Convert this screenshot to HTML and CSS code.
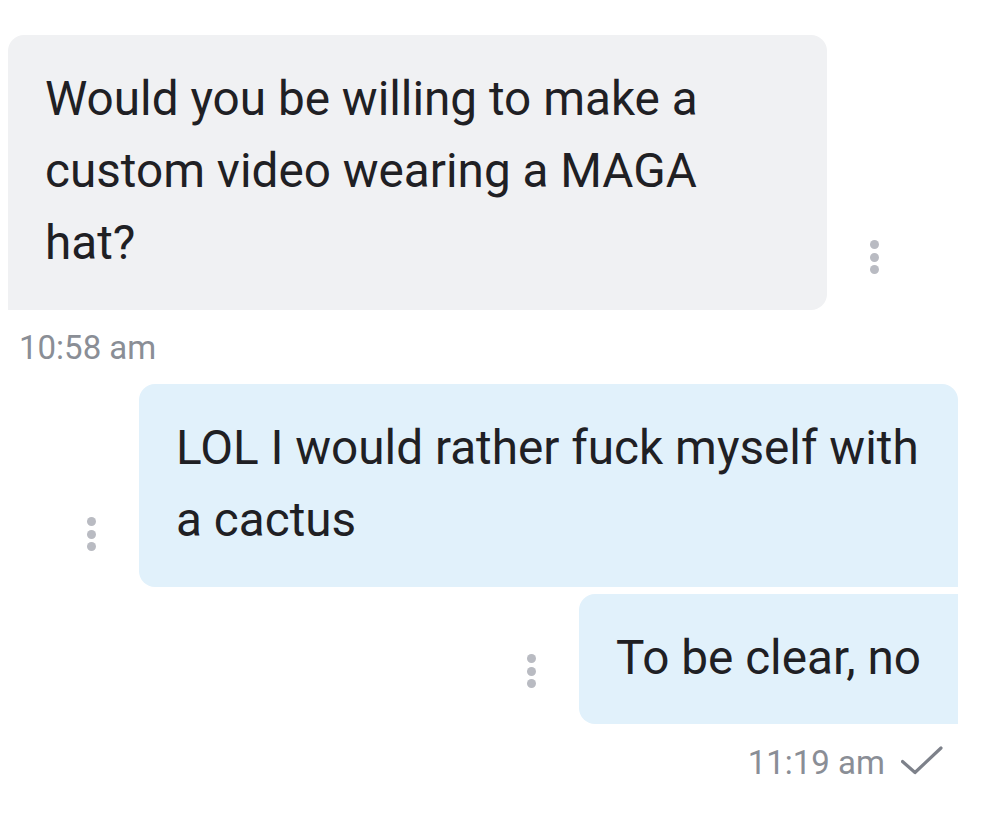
FILE: index.html
```html
<!DOCTYPE html>
<html lang="en">
<head>
<meta charset="utf-8">
<title>Chat</title>
<link rel="stylesheet" href="styles.css">
</head>
<body>
<div class="chat">
  <div class="row row-in">
    <div class="bubble bubble-in">Would you be willing to make a custom video wearing a MAGA hat?</div>
    <div class="dots"><span></span><span></span><span></span></div>
  </div>
  <div class="time time-in">10:58 am</div>

  <div class="row row-out">
    <div class="dots"><span></span><span></span><span></span></div>
    <div class="bubble bubble-out bubble-first">LOL I would rather fuck myself with a cactus</div>
  </div>
  <div class="row row-out row-next">
    <div class="dots"><span></span><span></span><span></span></div>
    <div class="bubble bubble-out bubble-last">To be clear, no</div>
  </div>
  <div class="time time-out">
    <span>11:19 am</span>
    <svg class="check" width="42" height="30" viewBox="0 0 42 30" aria-hidden="true">
      <path d="M1.5 15.5 L14 26.5 L40 2" fill="none" stroke="#7d818a" stroke-width="3.2" stroke-linecap="round" stroke-linejoin="round"/>
    </svg>
  </div>
</div>
</body>
</html>
```

FILE: styles.css
```css
html, body {
  margin: 0;
  padding: 0;
  background: #ffffff;
}

body {
  font-family: Roboto, "Liberation Sans", sans-serif;
  color: #1f2024;
}

.chat {
  width: 1007px;
  padding: 35px 49px 40px 8px;
  box-sizing: border-box;
  display: flex;
  flex-direction: column;
}

.row {
  display: flex;
  align-items: flex-end;
}

.row-out {
  justify-content: flex-end;
}

.row-next {
  margin-top: 7px;
}

.bubble {
  max-width: 819px;
  box-sizing: border-box;
  padding: 28px 37px 31px 37px;
  font-size: 47.7px;
  line-height: 72px;
  letter-spacing: 0;
}

.bubble-in {
  background: #f0f1f3;
  border-radius: 16px 16px 16px 0;
}

.bubble-out {
  background: #e1f1fb;
}

.bubble-first {
  border-radius: 16px 16px 0 16px;
}

.bubble-last {
  border-radius: 16px 0 0 16px;
  padding-bottom: 30px;
}

.dots {
  display: flex;
  flex-direction: column;
  gap: 3.5px;
  margin: 0 43px 36px 43px;
}

.dots span {
  width: 9px;
  height: 9px;
  border-radius: 50%;
  background: #b9bbc2;
}

.time {
  font-size: 33px;
  line-height: 38px;
  color: #8a8e96;
}

.time-in {
  margin: 19px 0 17px 11px;
}

.time-out {
  display: flex;
  justify-content: flex-end;
  align-items: center;
  gap: 16px;
  margin: 20px 15px 0 0;
}

.check {
  display: block;
  margin-top: -4px;
}
```
